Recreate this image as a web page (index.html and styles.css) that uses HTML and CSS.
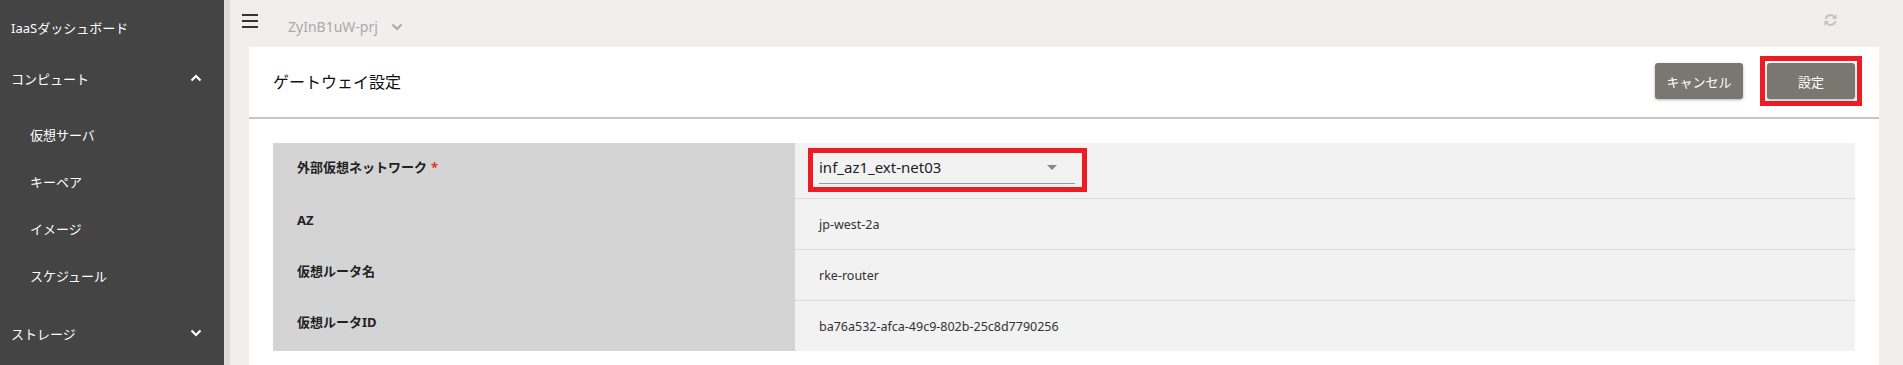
FILE: index.html
```html
<!DOCTYPE html>
<html lang="ja">
<head>
    <meta charset="UTF-8">
    <title>ゲートウェイ設定</title>
    <link rel="stylesheet" href="styles.css">
</head>
<body>

<nav class="sidebar">
    <div class="nav-item home">IaaSダッシュボード</div>
    <div class="nav-item">コンピュート
        <svg class="chev" width="12" height="8" viewBox="0 0 12 8"><path d="M1.5 6.5 L6 2 L10.5 6.5" fill="none" stroke="#fff" stroke-width="2.2"/></svg>
    </div>
    <div class="submenu">
        <div class="sub-item">仮想サーバ</div>
        <div class="sub-item">キーペア</div>
        <div class="sub-item">イメージ</div>
        <div class="sub-item">スケジュール</div>
    </div>
    <div class="nav-item">ストレージ
        <svg class="chev" width="12" height="8" viewBox="0 0 12 8"><path d="M1.5 1.5 L6 6 L10.5 1.5" fill="none" stroke="#fff" stroke-width="2.2"/></svg>
    </div>
</nav>

<main class="main">
    <div class="topbar">
        <div class="hamburger"><span></span><span></span><span></span></div>
        <div class="project">ZyInB1uW-prj
            <svg width="12" height="8" viewBox="0 0 12 8"><path d="M1.5 1.5 L6 6 L10.5 1.5" fill="none" stroke="#aaa" stroke-width="2"/></svg>
        </div>
        <svg class="refresh" width="15" height="14" viewBox="0 0 15 14">
            <path d="M2.6 6 A5 5 0 0 1 11.4 4" fill="none" stroke="#c4c4c4" stroke-width="2"/>
            <path d="M13.6 1 L13.6 6 L8.8 6 Z" fill="#c4c4c4"/>
            <path d="M12.4 8 A5 5 0 0 1 3.6 10" fill="none" stroke="#c4c4c4" stroke-width="2"/>
            <path d="M1.4 13 L1.4 8 L6.2 8 Z" fill="#c4c4c4"/>
        </svg>
    </div>

    <section class="card">
        <header class="card-header">
            <h1>ゲートウェイ設定</h1>
            <div class="actions">
                <button class="btn">キャンセル</button>
                <div class="mark-btn"><button class="btn">設定</button></div>
            </div>
        </header>

        <div class="card-body">
            <div class="detail">
                <div class="row first">
                    <div class="label">外部仮想ネットワーク <span class="req">*</span></div>
                    <div class="value">
                        <div class="mark-box">
                            <div class="select">inf_az1_ext-net03 <span class="caret"></span></div>
                        </div>
                    </div>
                </div>
                <div class="row">
                    <div class="label">AZ</div>
                    <div class="value">jp-west-2a</div>
                </div>
                <div class="row">
                    <div class="label">仮想ルータ名</div>
                    <div class="value">rke-router</div>
                </div>
                <div class="row">
                    <div class="label">仮想ルータID</div>
                    <div class="value">ba76a532-afca-49c9-802b-25c8d7790256</div>
                </div>
            </div>
        </div>
    </section>
</main>

</body>
</html>
```

FILE: styles.css
```css
* { margin: 0; padding: 0; box-sizing: border-box; font-family: "Noto Sans", "Noto Sans CJK JP", sans-serif; }

body { display: flex; height: 365px; overflow: hidden; background-color: #f0efed; }

/* sidebar */
.sidebar { width: 230px; flex-shrink: 0; background-color: #444; border-right: 6px solid #dcdcdc; color: #fff; font-size: 13px; }
.nav-item { height: 48px; display: flex; align-items: center; justify-content: space-between; padding: 0 22px 0 11px; }
.nav-item.home { height: 54px; }
.submenu { padding: 9px 0 10px; }
.sub-item { height: 47px; display: flex; align-items: center; padding-left: 30px; }

/* main area */
.main { flex: 1; padding: 0 24px 0 12px; display: flex; flex-direction: column; }

.topbar { height: 47px; flex-shrink: 0; display: flex; align-items: flex-start; }
.hamburger { width: 16px; margin-top: 14px; display: flex; flex-direction: column; gap: 4px; }
.hamburger span { height: 2px; background-color: #333; }
.project { margin: 17px 0 0 30px; color: #aaa; font-size: 14px; display: flex; align-items: center; gap: 13px; }
.refresh { margin: 13px 41px 0 auto; }

.card { background-color: #fff; flex: 1 0 auto; margin-left: 7px; }
.card-header { height: 72px; border-bottom: 2px solid #c6c6c6; display: flex; align-items: center; justify-content: space-between; padding: 0 17px 2px 24px; }
.card-header h1 { font-size: 16px; font-weight: normal; color: #111; }
.actions { display: flex; align-items: center; gap: 17px; }
.btn { width: 88px; height: 36px; border: none; border-radius: 3px; background-color: #7a7670; color: #fff; font-size: 13px; box-shadow: 0 1px 3px rgba(0, 0, 0, 0.3); }
.mark-btn { border: 5px solid #ed1c24; padding: 2px; display: flex; }

.card-body { padding: 24px; }

.detail { font-size: 13px; }
.row { display: grid; grid-template-columns: 522px 1fr; height: 51px; }
.row.first { height: 55px; }
.label { background-color: #d4d4d4; font-weight: bold; color: #222; padding: 0 24px 8px; display: flex; align-items: center; gap: 4px; }
.req { color: #e53030; }
.value { background-color: #f2f2f2; color: #333; font-size: 12.5px; padding-left: 24px; display: flex; align-items: center; }
.row + .row .value { border-top: 1px solid #dcdcdc; }
.row.first .value { padding: 0 0 1px 13px; }

.mark-box { border: 5px solid #ed1c24; padding: 0 7px 3px 6px; width: 279px; height: 44px; display: flex; align-items: flex-end; }
.select { flex: 1; height: 31px; border-bottom: 1px solid #999; font-size: 15px; color: #222; display: flex; align-items: center; justify-content: space-between; padding-bottom: 2px; }
.caret { width: 0; height: 0; border-left: 5px solid transparent; border-right: 5px solid transparent; border-top: 5px solid #888; margin-right: 18px; }
```
